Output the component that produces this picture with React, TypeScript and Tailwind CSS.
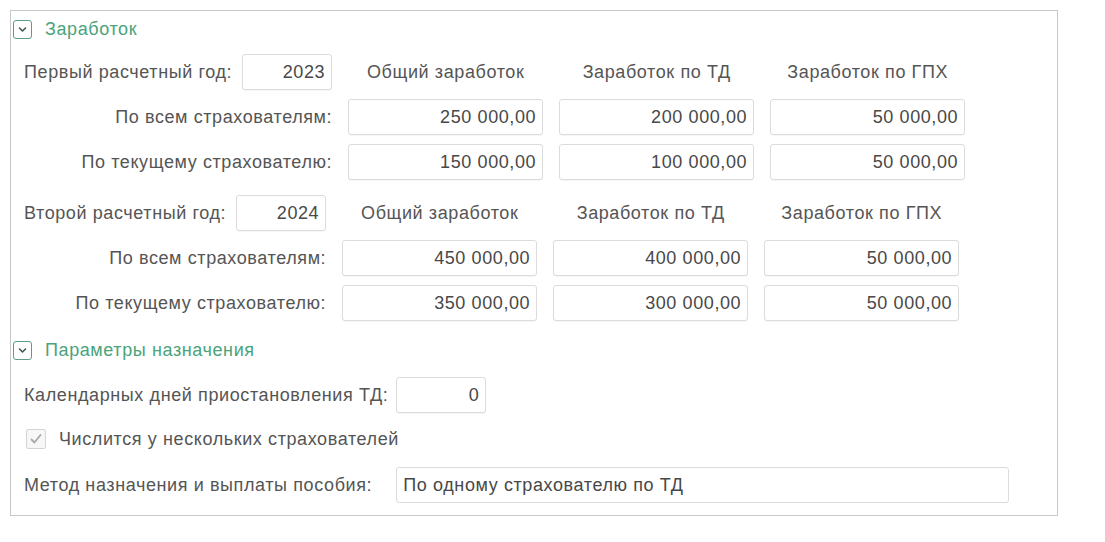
import React from 'react';

type Row = { label: string; total: string; td: string; gph: string };
type YearBlock = { yearLabel: string; year: string; rows: Row[] };

const blocks: YearBlock[] = [
  {
    yearLabel: 'Первый расчетный год:',
    year: '2023',
    rows: [
      { label: 'По всем страхователям:', total: '250 000,00', td: '200 000,00', gph: '50 000,00' },
      { label: 'По текущему страхователю:', total: '150 000,00', td: '100 000,00', gph: '50 000,00' },
    ],
  },
  {
    yearLabel: 'Второй расчетный год:',
    year: '2024',
    rows: [
      { label: 'По всем страхователям:', total: '450 000,00', td: '400 000,00', gph: '50 000,00' },
      { label: 'По текущему страхователю:', total: '350 000,00', td: '300 000,00', gph: '50 000,00' },
    ],
  },
];

function GroupHeader({ title }: { title: string }) {
  return (
    <div className="flex h-[20px] items-center gap-[13px] pl-[2px]">
      <span className="flex h-[19px] w-[19px] items-center justify-center rounded-[3px] border border-[#5f9c86] bg-white">
        <svg width="11" height="11" viewBox="0 0 11 11" fill="none">
          <path d="M2.5 4 L5.5 7 L8.5 4" stroke="#3d5a50" strokeWidth="1.6" strokeLinecap="round" strokeLinejoin="round" />
        </svg>
      </span>
      <span className="text-[#4aa37b]">{title}</span>
    </div>
  );
}

function Field({ value, className = '' }: { value: string; className?: string }) {
  return (
    <div
      className={`flex h-[36px] items-center justify-end rounded-[3px] border border-[#dcdcdc] bg-white pr-[6px] text-[#484848] shadow-[0_1px_1px_rgba(0,0,0,0.04)] ${className}`}
    >
      {value}
    </div>
  );
}

function EarningsBlock({ block }: { block: YearBlock }) {
  return (
    <div className="grid grid-cols-[auto_195px_195px_195px] justify-start gap-x-[16px] gap-y-[9px] pl-[13px]">
      <div className="flex items-center gap-[10px]">
        <span>{block.yearLabel}</span>
        <Field value={block.year} className="w-[90px]" />
      </div>
      <div className="flex items-center justify-center">Общий заработок</div>
      <div className="flex items-center justify-center">Заработок по ТД</div>
      <div className="flex items-center justify-center">Заработок по ГПХ</div>
      {block.rows.map((r) => (
        <React.Fragment key={r.label}>
          <div className="flex items-center justify-end">{r.label}</div>
          <Field value={r.total} />
          <Field value={r.td} />
          <Field value={r.gph} />
        </React.Fragment>
      ))}
    </div>
  );
}

export default function App() {
  return (
    <div className="min-h-screen bg-white p-[10px] font-['Liberation_Sans',Arial,sans-serif] text-[18px] tracking-[0.6px] text-[#555]">
      <div className="flex h-[506px] w-[1048px] flex-col border border-[#c8c8c8] pt-[8px]">
        <GroupHeader title="Заработок" />
        <div className="mt-[15px]">
          <EarningsBlock block={blocks[0]} />
        </div>
        <div className="mt-[15px]">
          <EarningsBlock block={blocks[1]} />
        </div>
        <div className="mt-[19px]">
          <GroupHeader title="Параметры назначения" />
        </div>

        <div className="mt-[17px] grid grid-cols-[auto_1fr] items-center gap-x-[8px] pl-[13px]">
          <span>Календарных дней приостановления ТД:</span>
          <Field value="0" className="w-[90px]" />

          <label className="col-span-2 mt-[16px] flex h-[20px] items-center gap-[13px] pl-[2px]">
            <span className="flex h-[20px] w-[20px] items-center justify-center rounded-[2px] border border-[#d4d4d4] bg-[#f7f7f7]">
              <svg width="14" height="14" viewBox="0 0 14 14" fill="none">
                <path d="M2.5 7.5 L5.5 10.5 L11.5 3" stroke="#a8a8a8" strokeWidth="1.8" strokeLinecap="round" strokeLinejoin="round" />
              </svg>
            </span>
            <span>Числится у нескольких страхователей</span>
          </label>

          <span className="mt-[18px]">Метод назначения и выплаты пособия:</span>
          <div className="mt-[18px] flex h-[36px] w-[613px] items-center rounded-[3px] border border-[#dcdcdc] bg-white pl-[6px] text-[#484848]">
            По одному страхователю по ТД
          </div>
        </div>
      </div>
    </div>
  );
}
